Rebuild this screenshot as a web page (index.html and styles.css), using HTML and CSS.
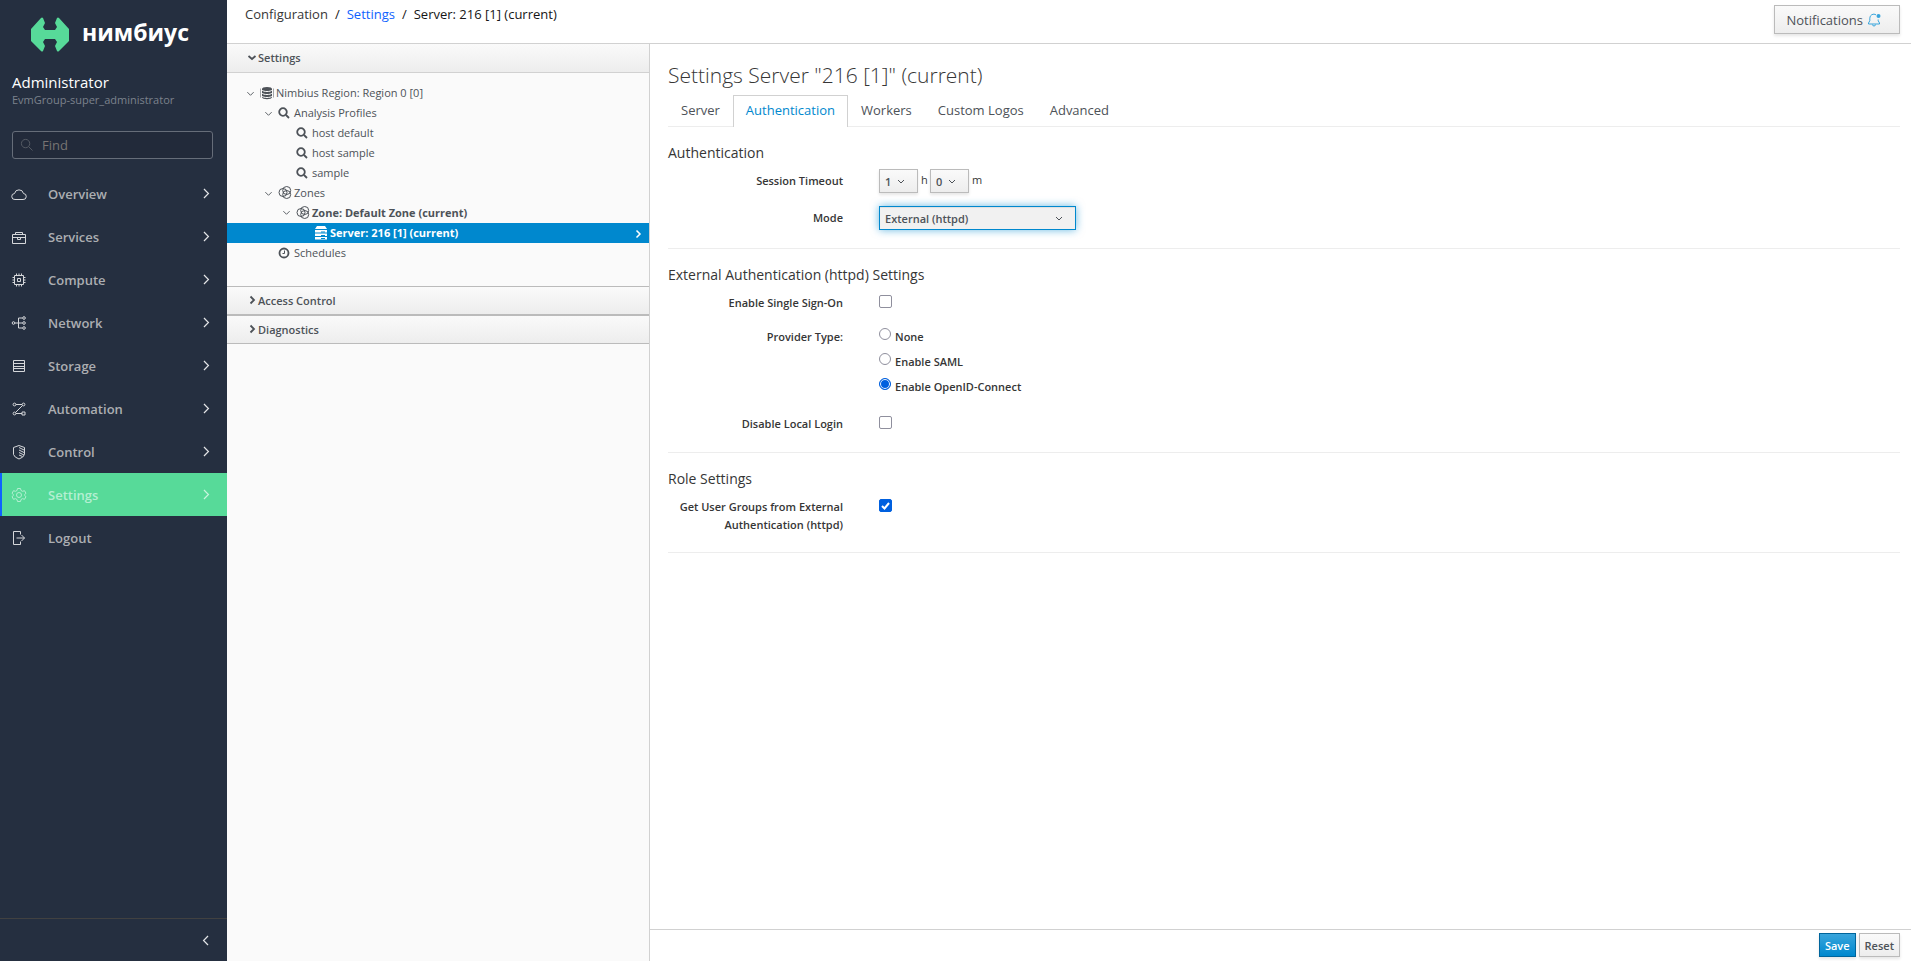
FILE: index.html
```html
<!DOCTYPE html>
<html lang="en">
<head>
    <meta charset="UTF-8">
    <meta name="viewport" content="width=device-width, initial-scale=1.0">
    <title>Settings</title>
    <link rel="stylesheet" href="styles.css">
</head>
<body>
    <svg class="sprite" aria-hidden="true">
        <symbol id="chevron-right" viewBox="0 0 16 16"><path d="M5.500 2.500 11 8l-5.500 5.500" /></symbol>
        <symbol id="chevron-left" viewBox="0 0 16 16"><path d="M10.500 2.500 5 8l5.500 5.500" /></symbol>
        <symbol id="angle-down" viewBox="0 0 10 10"><path d="M1.500 3.500 5 7l3.500-3.500" /></symbol>
        <symbol id="angle-right" viewBox="0 0 10 10"><path d="M3.500 1.500 7 5 3.500 8.500" /></symbol>
        <symbol id="caret-down" viewBox="0 0 10 10"><path d="M1.500 3 5 6l3.500-3" /></symbol>
        <symbol id="search" viewBox="0 0 12 12"><circle cx="5" cy="5" r="3.800" /><path d="m8 8 3 3" /></symbol>
        <symbol id="zone" viewBox="0 0 14 14"><circle cx="5" cy="6.500" r="4" /><circle cx="8.700" cy="4.500" r="4" /><circle cx="8.700" cy="8.500" r="4" /></symbol>
    </svg>

    <div class="app">
        <aside class="sidebar">
            <a class="brand" href="#">
                <svg class="brand-mark" viewBox="0 0 38 35">
                    <path d="M0 12 10 1q1-1 2 0l2 5-2 4 2 3h10l2-3-2-4 2-5q1-1 2 0l10 11v12L28 34q-1 1-2 0l-2-5 2-4-2-3H14l-2 3 2 4-2 5q-1 1-2 0L0 24z" fill="#57da99" />
                </svg>
                <span>нимбиус</span>
            </a>
            <div class="user">
                <div class="user-name">Administrator</div>
                <div class="user-group">EvmGroup-super_administrator</div>
            </div>
            <div class="find">
                <svg class="find-icon" viewBox="0 0 14 14"><circle cx="6" cy="6" r="4.500" /><path d="m9.500 9.500 4 4" /></svg>
                <input type="text" placeholder="Find" aria-label="Find">
            </div>
            <nav class="menu">
                <a href="#">
                    <svg class="menu-icon" viewBox="0 0 16 16"><path d="M4 13.500a3 3 0 0 1-.5-6 4.600 4.600 0 0 1 9 0 3 3 0 0 1-.5 6z" /></svg>
                    <span>Overview</span>
                    <svg class="menu-arrow"><use href="#chevron-right" /></svg>
                </a>
                <a href="#">
                    <svg class="menu-icon" viewBox="0 0 16 16"><path d="M1.500 5.500h13v9h-13zM4.500 5.500v-2h7v2M1.500 8.500h13M6.500 8.500v2h3v-2" /></svg>
                    <span>Services</span>
                    <svg class="menu-arrow"><use href="#chevron-right" /></svg>
                </a>
                <a href="#">
                    <svg class="menu-icon" viewBox="0 0 16 16"><path d="M3.500 3.500h9v9h-9zM6.500 6.500h3v3h-3zM5.500 3.500v-2M8 3.500v-2M10.500 3.500v-2M5.500 14.500v-2M8 14.500v-2M10.500 14.500v-2M3.500 5.500h-2M3.500 8h-2M3.500 10.500h-2M14.500 5.500h-2M14.500 8h-2M14.500 10.500h-2" /></svg>
                    <span>Compute</span>
                    <svg class="menu-arrow"><use href="#chevron-right" /></svg>
                </a>
                <a href="#">
                    <svg class="menu-icon" viewBox="0 0 16 16"><circle cx="2.500" cy="8" r="1.300" /><circle cx="13" cy="3" r="1.300" /><circle cx="13" cy="8" r="1.300" /><circle cx="13" cy="13" r="1.300" /><path d="M4 8h7.500M11.500 3h-4v10h4" /></svg>
                    <span>Network</span>
                    <svg class="menu-arrow"><use href="#chevron-right" /></svg>
                </a>
                <a href="#">
                    <svg class="menu-icon" viewBox="0 0 16 16"><path d="M2.500 2.500h11v11h-11zM2.500 5.500h11M2.500 8.500h11M2.500 10.500h11" /></svg>
                    <span>Storage</span>
                    <svg class="menu-arrow"><use href="#chevron-right" /></svg>
                </a>
                <a href="#">
                    <svg class="menu-icon" viewBox="0 0 16 16"><circle cx="3.500" cy="3.500" r="1.400" /><circle cx="12.500" cy="3.500" r="1.400" /><circle cx="3.500" cy="12.500" r="1.400" /><path d="M5 3.500h6M11.500 4.500l-7 7M5 12.500h6M11 11h3v3h-3z" /></svg>
                    <span>Automation</span>
                    <svg class="menu-arrow"><use href="#chevron-right" /></svg>
                </a>
                <a href="#">
                    <svg class="menu-icon" viewBox="0 0 16 16"><path d="M8 1.500 2.500 3.500v7q1 3 5.500 4.500 4.500-1.500 5.500-4.500v-7zM8 3.500l5 2.500M8 6l5 2.500M8 8.500l5 2.500M8 11l3.500 1.500" /></svg>
                    <span>Control</span>
                    <svg class="menu-arrow"><use href="#chevron-right" /></svg>
                </a>
                <a href="#" class="active">
                    <svg class="menu-icon" viewBox="0 0 16 16"><circle cx="8" cy="8" r="2.500" /><path d="M6.500 1.500h3l.5 2 1.500.8 2-.6 1.500 2.600-1.500 1.400v.6l1.500 1.400-1.500 2.600-2-.6-1.500.8-.5 2h-3l-.5-2-1.500-.8-2 .6L1 9.700l1.500-1.400v-.6L1 6.300l1.500-2.600 2 .6L6 3.500z" /></svg>
                    <span>Settings</span>
                    <svg class="menu-arrow"><use href="#chevron-right" /></svg>
                </a>
                <a href="#">
                    <svg class="menu-icon" viewBox="0 0 16 16"><path d="M9.500 4.500v-3h-7v13h7v-3M5.500 8h8M10.500 5l3 3-3 3" /></svg>
                    <span>Logout</span>
                </a>
            </nav>
            <div class="sidebar-footer">
                <button type="button" aria-label="Collapse menu"><svg class="menu-arrow"><use href="#chevron-left" /></svg></button>
            </div>
        </aside>

        <div class="page">
            <header class="topbar">
                <nav class="breadcrumb">
                    <span class="crumb-root">Configuration</span>
                    <span>/</span>
                    <a href="#">Settings</a>
                    <span>/</span>
                    <span>Server: 216 [1] (current)</span>
                </nav>
                <button type="button" class="btn notifications">
                    Notifications
                    <svg viewBox="0 0 14 14"><path d="M9 1.800a4 4 0 0 0-6.200 3.400v2.600L1.500 10v1h11v-1l-1.300-2.200V6.500M5.500 11.500a1.500 1.500 0 0 0 3 0" fill="none" stroke="#39a5dc" /><circle cx="11.500" cy="3" r="2" fill="#39a5dc" /></svg>
                </button>
            </header>

            <div class="columns">
                <section class="explorer">
                    <button type="button" class="accordion accordion-open"><svg><use href="#caret-down" /></svg>Settings</button>
                    <ul class="tree">
                        <li>
                            <svg class="expander"><use href="#angle-down" /></svg>
                            <svg class="node-icon" viewBox="0 0 14 14"><path d="M2 3v8c0 3 10 3 10 0V3z" fill="currentColor" /><ellipse cx="7" cy="3" rx="5" ry="2" fill="currentColor" /><path d="M2 4c1 2 9 2 10 0M2 7c1 2 9 2 10 0M2 10c1 2 9 2 10 0" fill="none" stroke="#fafafa" /><path d="M.5 2.500v9M13.500 2.500v9" stroke="currentColor" opacity=".5" /></svg>
                            <span>Nimbius Region: Region 0 [0]</span>
                        </li>
                        <li class="level-2">
                            <svg class="expander"><use href="#angle-down" /></svg>
                            <svg class="node-icon find-node"><use href="#search" /></svg>
                            <span>Analysis Profiles</span>
                        </li>
                        <li class="level-3 leaf"><svg class="node-icon find-node"><use href="#search" /></svg><span>host default</span></li>
                        <li class="level-3 leaf"><svg class="node-icon find-node"><use href="#search" /></svg><span>host sample</span></li>
                        <li class="level-3 leaf"><svg class="node-icon find-node"><use href="#search" /></svg><span>sample</span></li>
                        <li class="level-2">
                            <svg class="expander"><use href="#angle-down" /></svg>
                            <svg class="node-icon zone-node"><use href="#zone" /></svg>
                            <span>Zones</span>
                        </li>
                        <li class="level-3 current">
                            <svg class="expander"><use href="#angle-down" /></svg>
                            <svg class="node-icon zone-node"><use href="#zone" /></svg>
                            <span>Zone: Default Zone (current)</span>
                        </li>
                        <li class="level-4 leaf current selected">
                            <svg class="node-icon" viewBox="0 0 14 14"><path d="M3 0h8l2 3H1zM1 4h12v2.500H1zM1 7.500h12V10H1zM1 11h12v2.500H1z" fill="currentColor" /><path d="M7 6h4M7 9.500h4M7 12.500h4" stroke="#0088ce" /></svg>
                            <span>Server: 216 [1] (current)</span>
                            <svg class="selected-arrow"><use href="#angle-right" /></svg>
                        </li>
                        <li class="level-2 leaf">
                            <svg class="node-icon find-node" viewBox="0 0 12 12"><circle cx="6" cy="6" r="4.500" /><path d="M6.500 3.500v3h-2" class="thin" /></svg>
                            <span>Schedules</span>
                        </li>
                    </ul>
                    <button type="button" class="accordion"><svg><use href="#angle-right" /></svg>Access Control</button>
                    <button type="button" class="accordion"><svg><use href="#angle-right" /></svg>Diagnostics</button>
                </section>

                <main class="content">
                    <div class="content-body">
                        <h1>Settings Server "216 [1]" (current)</h1>
                        <nav class="tabs">
                            <a href="#">Server</a>
                            <a href="#" class="active">Authentication</a>
                            <a href="#">Workers</a>
                            <a href="#">Custom Logos</a>
                            <a href="#">Advanced</a>
                        </nav>

                        <form id="auth-form">
                            <section class="form-section">
                                <h3>Authentication</h3>
                                <div class="form-group">
                                    <label for="hours">Session Timeout</label>
                                    <div class="timeout">
                                        <select id="hours" class="short"><option>1</option></select>
                                        <span>h</span>
                                        <select class="short" aria-label="Minutes"><option>0</option></select>
                                        <span>m</span>
                                    </div>
                                </div>
                                <div class="form-group">
                                    <label for="mode">Mode</label>
                                    <div><select id="mode" class="mode"><option>External (httpd)</option></select></div>
                                </div>
                            </section>

                            <section class="form-section">
                                <h3>External Authentication (httpd) Settings</h3>
                                <div class="form-group check-group">
                                    <label for="sso">Enable Single Sign-On</label>
                                    <div><input type="checkbox" id="sso"></div>
                                </div>
                                <div class="form-group check-group">
                                    <span class="group-label" id="provider-label">Provider Type:</span>
                                    <div class="radios" role="radiogroup" aria-labelledby="provider-label">
                                        <label><input type="radio" name="provider">None</label>
                                        <label><input type="radio" name="provider">Enable SAML</label>
                                        <label><input type="radio" name="provider" checked>Enable OpenID-Connect</label>
                                    </div>
                                </div>
                                <div class="form-group check-group">
                                    <label for="local-login">Disable Local Login</label>
                                    <div><input type="checkbox" id="local-login"></div>
                                </div>
                            </section>

                            <section class="form-section">
                                <h3>Role Settings</h3>
                                <div class="form-group check-group">
                                    <label for="groups">Get User Groups from External Authentication (httpd)</label>
                                    <div><input type="checkbox" id="groups" checked></div>
                                </div>
                            </section>
                        </form>
                    </div>
                    <footer class="form-buttons">
                        <button type="submit" form="auth-form" class="btn btn-primary">Save</button>
                        <button type="reset" form="auth-form" class="btn">Reset</button>
                    </footer>
                </main>
            </div>
        </div>
    </div>
</body>
</html>
```

FILE: styles.css
```css
* {
    box-sizing: border-box;
}

body {
    margin: 0;
    font-family: "Open Sans", "Noto Sans", sans-serif;
    font-size: 12px;
    line-height: 20px;
    color: #363636;
    background: #fff;
}

button, input, select {
    font-family: inherit;
}

a {
    text-decoration: none;
}

.sprite {
    display: none;
}

.app {
    display: flex;
    min-height: 100vh;
}

/* sidebar */
.sidebar {
    display: flex;
    flex-direction: column;
    flex: 0 0 227px;
    background: #252f40;
}

.brand {
    display: flex;
    align-items: center;
    gap: 13px;
    height: 68px;
    padding-left: 31px;
    color: #fff;
    font-size: 23px;
    font-weight: 700;
}

.brand span {
    padding-bottom: 4px;
}

.brand-mark {
    width: 38px;
    height: 35px;
}

.user {
    padding: 4px 12px 0;
}

.user-name {
    color: #fff;
    font-size: 15px;
}

.user-group {
    color: #7c828c;
    font-size: 11px;
    line-height: 16px;
}

.find {
    position: relative;
    margin: 23px 14px 13px 12px;
}

.find input {
    display: block;
    width: 100%;
    height: 28px;
    padding: 0 8px 0 29px;
    color: #fff;
    background: #222a3a;
    border: 1px solid #666d79;
    border-radius: 3px;
    font-size: 13px;
}

.find input::placeholder {
    color: #777472;
}

.find-icon {
    position: absolute;
    left: 8px;
    top: 7px;
    width: 13px;
    height: 13px;
    fill: none;
    stroke: #575d67;
}

.menu a {
    display: flex;
    align-items: center;
    height: 43px;
    padding: 0 13px 0 11px;
    color: #acaeb2;
    font-size: 13px;
    font-weight: 600;
}

.menu span {
    flex: 1;
}

.menu a.active {
    padding-left: 9px;
    border-left: 2px solid #0f62fe;
    color: #b4efd2;
    background: #57da99;
}

.menu-icon {
    width: 16px;
    height: 16px;
    margin-right: 21px;
    fill: none;
    stroke: #d5d7da;
}

.active .menu-icon {
    stroke: #b4efd2;
}

.menu-arrow {
    width: 16px;
    height: 13px;
    fill: none;
    stroke: #e4e5e7;
    stroke-width: 1.5;
}

.active .menu-arrow {
    stroke: #c9f4de;
}

.sidebar-footer {
    display: flex;
    justify-content: flex-end;
    height: 43px;
    margin-top: auto;
    padding-right: 13px;
    border-top: 1px solid #414141;
}

.sidebar-footer button {
    display: flex;
    align-items: center;
    padding: 0;
    background: none;
    border: none;
}

/* top bar */
.page {
    display: flex;
    flex-direction: column;
    flex: 1;
    min-width: 0;
}

.topbar {
    display: flex;
    justify-content: space-between;
    align-items: flex-start;
    height: 44px;
    padding: 5px 11px 0 18px;
    border-bottom: 1px solid #d1d1d1;
}

.breadcrumb {
    display: flex;
    gap: 7px;
    font-size: 13px;
    line-height: 18px;
    color: #161616;
}

.crumb-root {
    color: #363636;
}

.breadcrumb a {
    color: #0f62fe;
}

.btn {
    padding: 0 5px;
    height: 24px;
    color: #4d5258;
    background: linear-gradient(#fafafa, #ededed);
    border: 1px solid #bbb;
    font-size: 11px;
    font-weight: 600;
    box-shadow: 0 2px 3px rgba(3, 3, 3, 0.1);
}

.btn-primary {
    color: #fff;
    background: linear-gradient(#39a5dc, #0088ce);
    border-color: #00659c;
}

.notifications {
    display: flex;
    align-items: center;
    gap: 4px;
    height: 29px;
    padding: 0 18px 0 11px;
    font-size: 13px;
    font-weight: 400;
}

.notifications svg {
    width: 14px;
    height: 14px;
}

.columns {
    display: flex;
    flex: 1;
}

/* tree */
.explorer {
    flex: 0 0 423px;
    background: #fafafa;
    border-right: 1px solid #d1d1d1;
}

.accordion {
    display: flex;
    align-items: center;
    gap: 1px;
    width: 100%;
    height: 29px;
    padding: 0 20px 1px;
    color: #4d5258;
    background: linear-gradient(#fafafa, #ededed);
    border: solid #bbb;
    border-width: 1px 0;
    font-size: 11px;
    font-weight: 600;
}

.accordion-open {
    border-top: none;
    border-color: #d1d1d1;
}

.accordion svg {
    width: 10px;
    height: 10px;
    fill: none;
    stroke: #4d5258;
    stroke-width: 1.8;
}

.tree {
    margin: 0;
    padding: 10px 0 23px;
    list-style: none;
    font-size: 11px;
    color: #4d5258;
}

.tree li {
    display: flex;
    align-items: center;
    height: 20px;
    padding-left: 19px;
}

.tree .level-2 {
    padding-left: 37px;
}

.tree .level-3 {
    padding-left: 55px;
}

.tree .level-4 {
    padding-left: 73px;
}

.tree .leaf::before {
    content: "";
    width: 14px;
}

.tree .current {
    padding-bottom: 1px;
    font-weight: 700;
}

.tree .selected {
    color: #fff;
    background: #0088ce;
}

.expander {
    width: 9px;
    height: 9px;
    margin-right: 5px;
    fill: none;
    stroke: #4d5258;
}

.node-icon {
    width: 14px;
    height: 14px;
    margin-right: 2px;
}

.find-node {
    width: 12px;
    height: 12px;
    margin-right: 4px;
    fill: none;
    stroke: currentColor;
    stroke-width: 1.8;
}

.find-node .thin {
    stroke-width: 1;
}

.zone-node {
    fill: none;
    stroke: currentColor;
}

.selected-arrow {
    width: 10px;
    height: 10px;
    margin: 2px 6px 0 auto;
    fill: none;
    stroke: #fff;
    stroke-width: 1.5;
}

/* content */
.content {
    display: flex;
    flex-direction: column;
    flex: 1;
    min-width: 0;
}

.content-body {
    flex: 1;
    padding: 17px 11px 0 18px;
}

h1 {
    margin: 0;
    font-size: 21px;
    font-weight: 300;
    line-height: 28px;
}

.tabs {
    display: flex;
    margin-top: 6px;
    border-bottom: 1px solid #ededed;
    font-size: 13px;
}

.tabs a {
    height: 32px;
    margin-bottom: -1px;
    padding: 4px 12px;
    border: 1px solid transparent;
    border-bottom: none;
    color: #4d5258;
}

.tabs a.active {
    color: #0088ce;
    background: #fff;
    border-color: #d1d1d1;
}

.form-section {
    padding: 16px 0 18px;
    border-bottom: 1px solid #ededed;
}

h3 {
    margin: 0 0 6px;
    font-size: 14px;
    font-weight: 400;
    line-height: 20px;
}

.form-group {
    display: grid;
    grid-template-columns: 6fr 35fr;
    column-gap: 36px;
    margin-bottom: 13px;
    font-size: 11px;
    font-weight: 600;
    line-height: 18px;
}

.form-group > label, .group-label {
    padding-top: 3px;
    text-align: right;
}

.form-section .form-group:last-child {
    margin-bottom: 0;
}

.timeout {
    display: flex;
    align-items: center;
    gap: 3px;
    font-weight: 400;
}

.timeout span {
    width: 6px;
    margin-bottom: 2px;
}

select {
    appearance: none;
    display: block;
    height: 24px;
    padding: 0 5px;
    color: #4d5258;
    background: url("data:image/svg+xml,%3Csvg xmlns='http://www.w3.org/2000/svg' width='8' height='8' fill='none' stroke='%234d5258'%3E%3Cpath d='M1 3l3 3 3-3'/%3E%3C/svg%3E") no-repeat right 12px center, linear-gradient(#fafafa, #ededed);
    border: 1px solid #bbb;
    border-radius: 0;
    font-size: 11px;
    font-weight: 600;
    box-shadow: 0 2px 3px rgba(3, 3, 3, 0.1);
}

.short {
    width: 39px;
}

.mode {
    width: 197px;
    background-image: url("data:image/svg+xml,%3Csvg xmlns='http://www.w3.org/2000/svg' width='8' height='8' fill='none' stroke='%234d5258'%3E%3Cpath d='M1 3l3 3 3-3'/%3E%3C/svg%3E");
    background-color: #f1f1f1;
    border-color: #0088ce;
    box-shadow: inset 0 1px 1px rgba(3, 3, 3, 0.07), 0 0 8px rgba(0, 136, 206, 0.6);
}

.check-group {
    margin-bottom: 12px;
    min-height: 22px;
}

input[type="checkbox"], input[type="radio"] {
    appearance: none;
    display: block;
    width: 13px;
    height: 13px;
    margin: 4px 0 0;
    border: 1px solid #8f8f9d;
    border-radius: 2px;
    background: #fff;
}

input[type="checkbox"]:checked {
    border-color: #0060df;
    background: #0060df url("data:image/svg+xml,%3Csvg xmlns='http://www.w3.org/2000/svg' width='11' height='11' fill='none' stroke='white' stroke-width='2'%3E%3Cpath d='M2 6l2.500 2.500L9 3'/%3E%3C/svg%3E") center no-repeat;
}

input[type="radio"] {
    width: 12px;
    height: 12px;
    margin: 0;
    border-radius: 50%;
}

input[type="radio"]:checked {
    border-color: #0060df;
    background: #0060df;
    box-shadow: inset 0 0 0 1px #fff;
}

.radios label {
    display: flex;
    gap: 4px;
    height: 25px;
    padding-top: 3px;
}

.form-buttons {
    display: flex;
    justify-content: flex-end;
    gap: 3px;
    height: 32px;
    padding: 3px 11px 0;
    border-top: 1px solid #d1d1d1;
}
```
